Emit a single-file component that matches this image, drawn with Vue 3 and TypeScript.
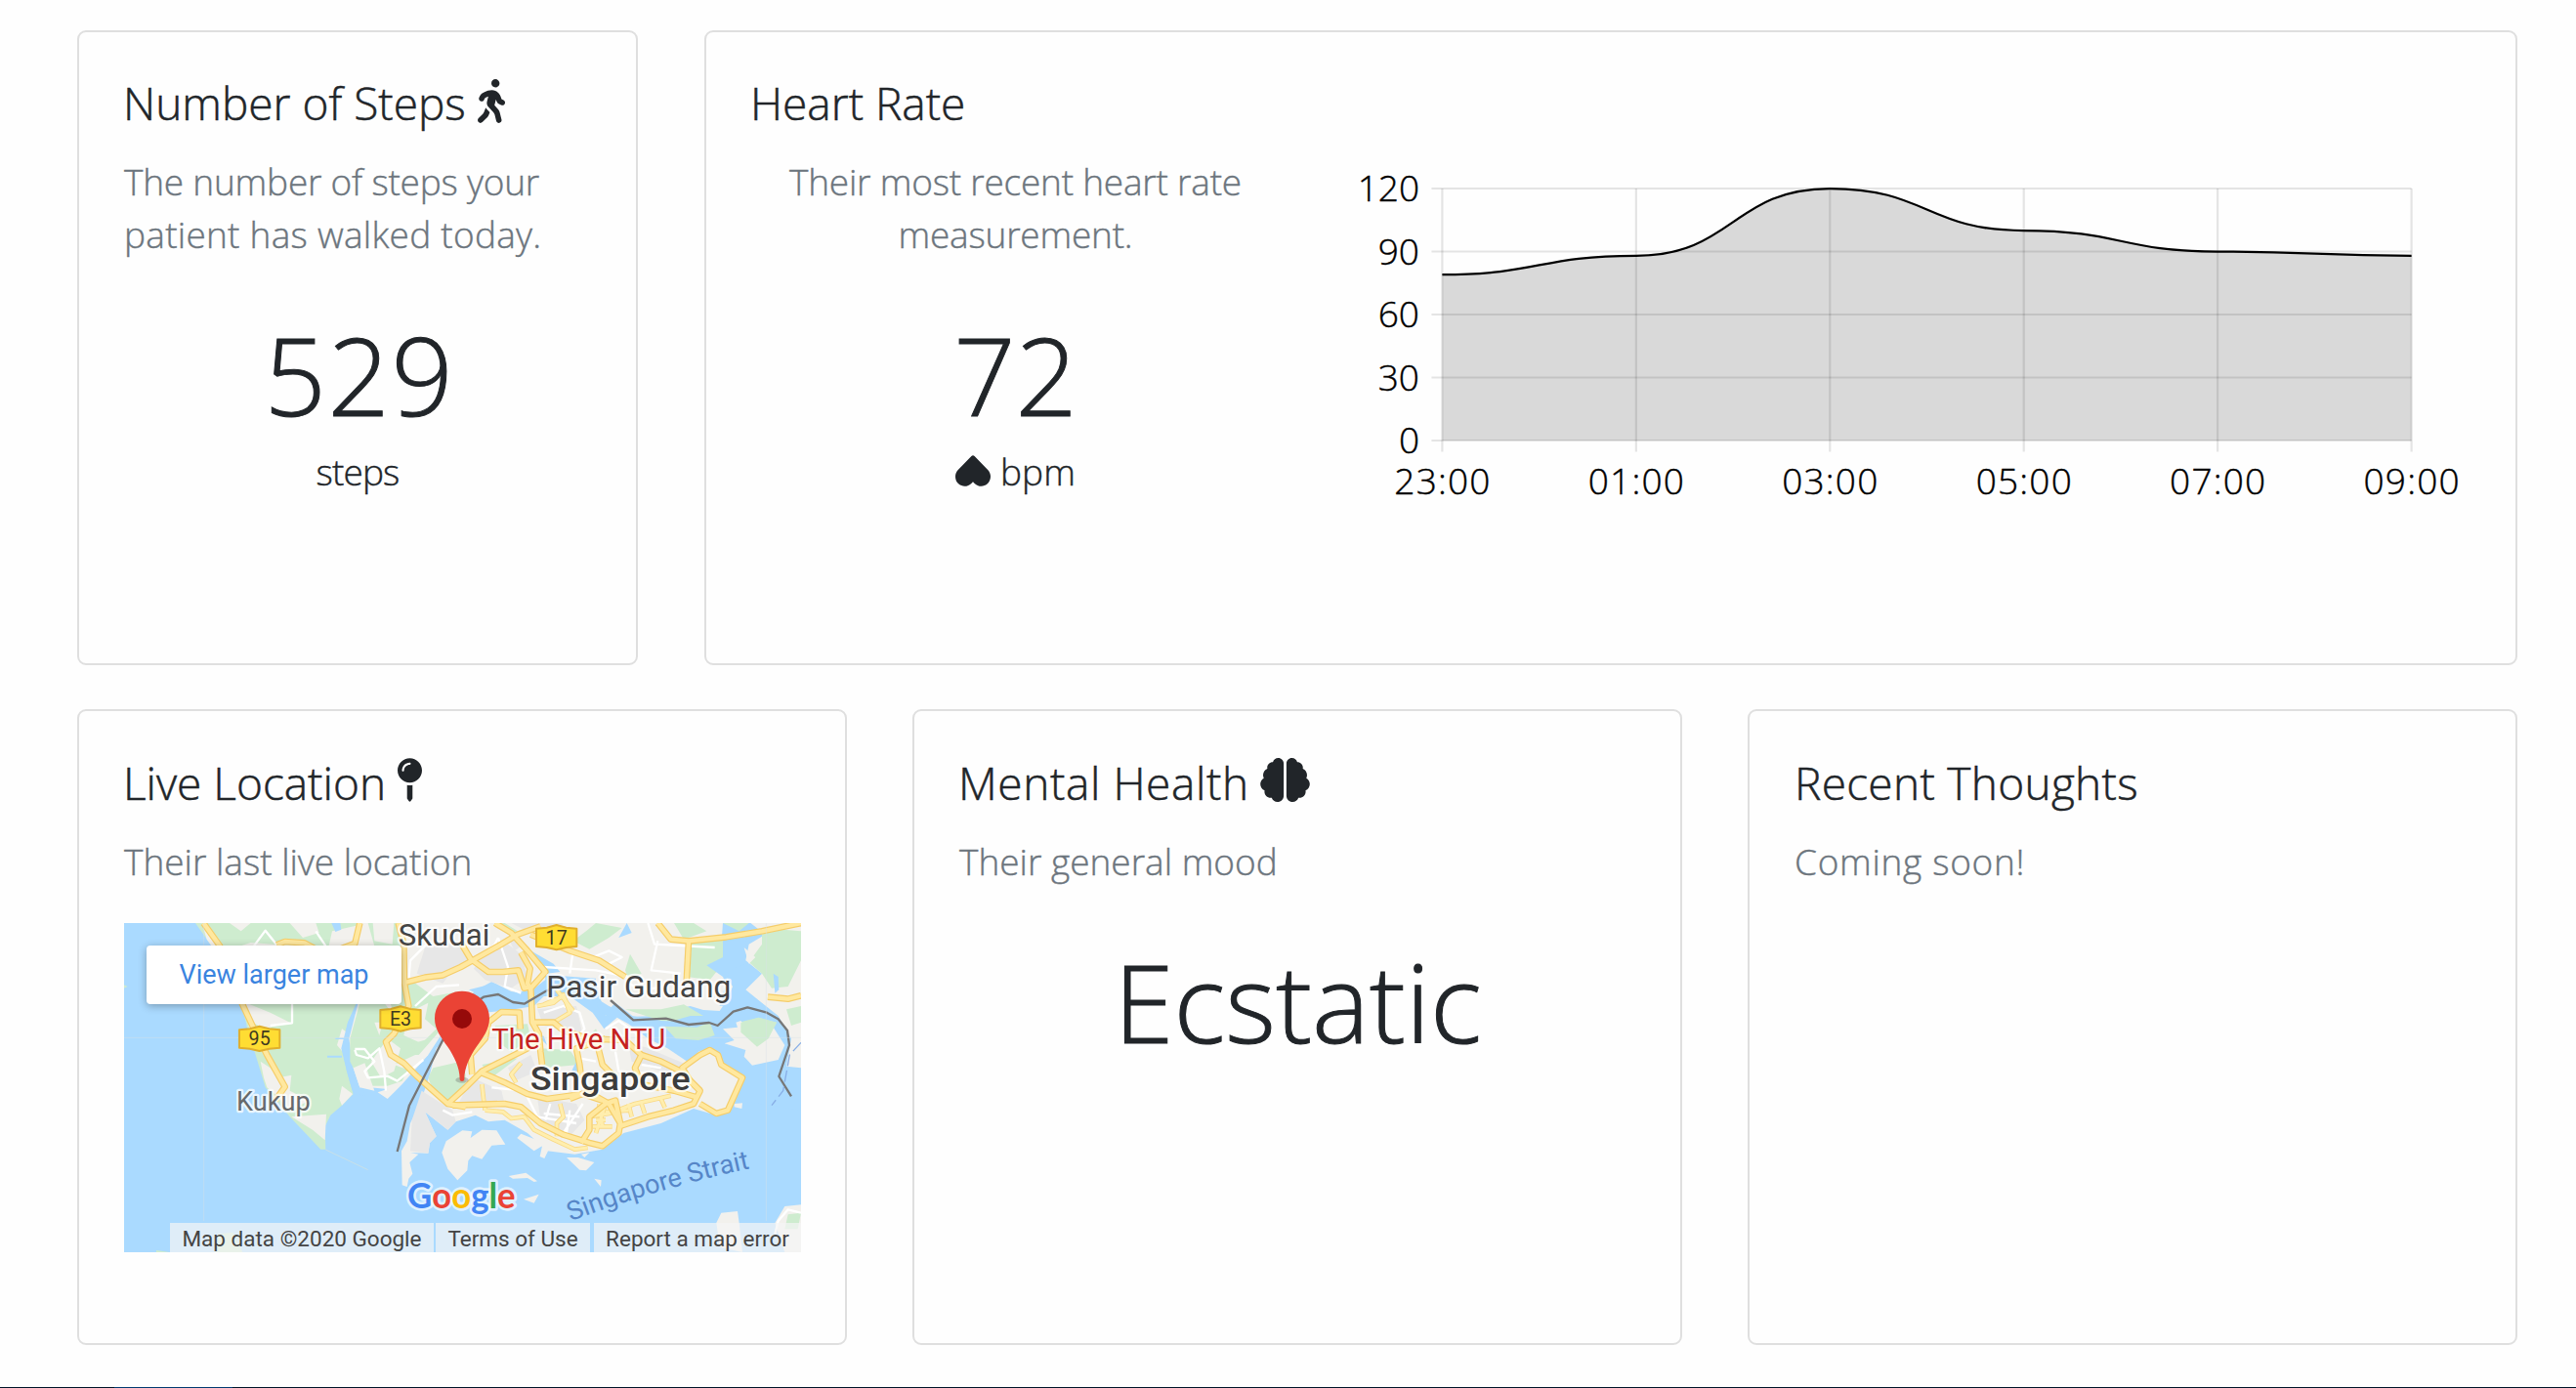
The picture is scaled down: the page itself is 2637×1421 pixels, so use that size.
<script setup lang="ts">
interface Sample { time: string; bpm: number }

const samples: Sample[] = [
  { time: '23:00', bpm: 79 },
  { time: '01:00', bpm: 88 },
  { time: '03:00', bpm: 120 },
  { time: '05:00', bpm: 100 },
  { time: '07:00', bpm: 90 },
  { time: '09:00', bpm: 88 },
]
const ticks: number[] = [120, 90, 60, 30, 0]

// Plot area inside the chart's own 1150 x 360 canvas
const left = 96.4
const right = 1088.6
const top = 28
const bottom = 286
const xAt = (i: number): number => left + (i * (right - left)) / (samples.length - 1)
const yAt = (v: number): number => bottom - (v / 120) * (bottom - top)

const curve: string = samples
  .map((s, i) => {
    const x = xAt(i)
    const y = yAt(s.bpm)
    if (i === 0) return `M${x} ${y}`
    const mid = (xAt(i - 1) + x) / 2
    return `C${mid} ${yAt(samples[i - 1].bpm)} ${mid} ${y} ${x} ${y}`
  })
  .join('')
const area: string = `${curve}L${right} ${bottom}L${left} ${bottom}Z`

const majorRoads: string[] = [
  // Johor
  'M295 45L345 115L410 285L450 370L490 450L545 548L515 590',
  'M520 112L545 102L605 106L640 125L700 130L760 108L775 45',
  'M893 45L910 110L912 230L925 300L880 385L855 410L870 450L910 475L950 515L1045 600L1100 610',
  'M912 228L975 212L1030 205L1085 180L1130 155L1210 110L1260 80L1330 55',
  'M1085 105L1115 155L1170 195L1215 195L1262 190L1280 245L1300 240',
  'M1190 45L1240 75L1290 130L1345 195L1300 245L1305 350L1325 385L1330 440L1335 480',
  'M1270 135L1298 185L1290 230L1300 250',
  'M1300 80L1420 130L1510 160L1590 210',
  'M1690 45L1730 95L1785 100L1900 88L2010 70L2130 45',
  'M1785 100L1778 230',
  'M2028 272L2090 278L2130 268',
  // Singapore
  'M1045 600L1100 550L1150 500L1210 470L1290 430L1320 400',
  'M1060 605L1220 600L1270 610L1330 660L1400 695L1480 720L1520 730L1570 690L1575 660L1540 600L1505 580L1470 565L1420 585',
  'M1150 505L1220 535L1290 570L1350 585L1460 570L1520 590',
  'M1120 510L1115 450L1160 400L1170 350L1210 318L1265 320L1268 370',
  'M1530 400L1440 430L1450 480L1455 520',
  'M1500 400L1520 480L1560 520',
  'M1310 350L1370 350L1400 375L1480 400L1590 405L1640 450L1700 470L1760 500L1820 560L1800 600L1740 620L1660 640L1570 670',
  'M1455 720L1480 680L1480 640L1530 600L1560 590L1575 660',
  'M1640 450L1620 490L1640 540L1740 560L1810 580',
  'M1820 560L1790 530L1765 490L1820 450L1850 435L1875 450L1885 480L1950 520L1905 620L1870 630L1820 600',
]
const minorRoads: string[] = [
  'M1160 620L1215 625L1240 645L1280 640L1310 680L1370 710L1435 740L1475 735',
  'M1150 540L1155 585L1160 620',
  'M1270 475L1240 510L1255 535',
  'M1320 300L1370 290L1400 265L1420 320L1370 350',
  'M1340 295L1400 270M1380 250L1430 315',
  'M1390 600L1400 640L1380 660L1380 700',
  'M1480 640L1540 630L1620 600L1730 575M1530 625L1600 620M1600 600L1610 640M1640 600L1650 630M1700 585L1712 612',
  'M1500 650L1530 650M1490 670L1550 670M1510 600L1520 670M1530 600L1500 690',
]
const lanes: string[] = [
  'M450 115L485 68L520 112',
  'M567 290L567 352L500 360',
  'M640 70L670 115',
  'M760 432L790 432L820 470L790 500L800 520L860 515L890 530L970 465',
  'M760 435L765 450L800 460L835 430L850 500L855 560',
  'M925 220L930 160L980 110',
  'M945 300L1010 240L1080 235',
  'M1200 90L1230 180L1220 240L1270 260',
  'M1130 160L1190 110L1200 90',
  'M1340 180L1500 190L1600 210',
  'M1430 130L1420 200M1490 150L1540 130L1580 150L1530 175L1500 160',
  'M1660 45L1680 110L1865 120',
  'M1690 100L1670 190L1760 200M1600 230L1640 250L1720 240',
  'M1530 370L1570 345L1620 380L1640 410',
  'M1340 320L1400 300L1450 320L1465 370L1440 400',
  'M1030 620L1060 635L1120 625',
  'M1180 550L1280 560L1320 640L1440 660',
  'M1360 600L1345 650M1420 620L1410 690M1460 600L1400 690M1340 630L1450 640',
  'M1450 460L1500 470M1560 440L1570 500L1700 510M1640 480L1700 490',
  'M2050 1000L2060 960L2090 925L2130 935',
]
const shields = [
  { label: '95', x: 467, y: 400 },
  { label: 'E3', x: 900, y: 339 },
  { label: '17', x: 1379, y: 89 },
]
</script>

<template>
  <main class="dashboard">
    <div class="row row-top">
      <section class="card steps-card">
        <h2 class="title"><span>Number of Steps</span>
          <svg class="icon walk" viewBox="0 0 320 512"><path d="M208 96c26.500 0 48-21.500 48-48S234.500 0 208 0s-48 21.500-48 48 21.500 48 48 48zm94.500 149.100l-23.300-11.800-9.700-29.400c-14.700-44.600-55.700-75.800-102.200-75.900-36-.1-55.900 10.100-93.300 25.200-21.600 8.700-39.300 25.200-49.700 46.200L17.600 213c-7.800 15.800-1.500 35 14.200 42.900 15.600 7.900 34.600 1.500 42.500-14.300L81 228c3.500-7 9.300-12.500 16.500-15.400l26.800-10.800-15.200 60.700c-5.200 20.800.4 42.900 14.900 58.800l59.900 65.400c7.200 7.900 12.300 17.400 14.900 27.700l18.300 73.300c4.300 17.100 21.700 27.600 38.800 23.300 17.100-4.300 27.600-21.700 23.300-38.800l-22.200-89c-2.600-10.300-7.700-19.900-14.900-27.700l-45.500-49.700 17.200-68.700 5.500 16.500c5.300 16.100 16.700 29.400 31.700 37l23.300 11.800c15.600 7.900 34.600 1.500 42.500-14.300 7.700-15.700 1.400-35.100-14.300-43zM73.600 385.800c-3.200 8.100-8 15.400-14.200 21.500l-50 50.100c-12.500 12.500-12.500 32.800 0 45.300s32.700 12.500 45.200 0l59.400-59.400c6.100-6.100 10.900-13.400 14.200-21.500l13.500-33.800c-55.300-60.300-38.700-41.800-47.400-53.700l-20.700 51.500z" /></svg>
        </h2>
        <p class="subtitle"><span class="tight">The number of steps your</span><br><span class="loose">patient has walked today.</span></p>
        <div class="reading figure-529">529</div>
        <div class="unit unit-steps">steps</div>
      </section>

      <section class="card heart-card">
        <div class="heart-info">
          <h2 class="title">Heart Rate</h2>
          <p class="subtitle centered"><span class="tight">Their most recent heart rate</span><br><span class="tight">measurement.</span></p>
          <div class="reading">72</div>
          <div class="unit unit-bpm">
            <svg class="heart" viewBox="0 31 512 450"><path transform="rotate(180 256 256)" d="M462.300 62.600C407.500 15.900 326 24.300 275.700 76.200L256 96.500l-19.700-20.300C186.100 24.300 104.500 15.900 49.700 62.600c-62.800 53.600-66.100 149.800-9.900 207.900l193.500 199.800c12.500 12.900 32.800 12.900 45.300 0l193.500-199.800c56.300-58.100 53-154.300-9.800-207.900z" /></svg>
            <span>bpm</span>
          </div>
        </div>
        <svg class="chart" width="1150" height="360" viewBox="0 0 1150 360">
          <g class="grid">
            <line v-for="t in ticks" :key="'h' + t" :x1="left - 11" :x2="right" :y1="yAt(t)" :y2="yAt(t)" />
            <line v-for="(s, i) in samples" :key="'v' + s.time" :x1="xAt(i)" :x2="xAt(i)" :y1="top" :y2="bottom + 11.500" />
          </g>
          <path class="area" :d="area" />
          <path class="curve" :d="curve" />
          <text v-for="t in ticks" :key="'y' + t" class="label y-label" x="73" :y="yAt(t) + 13">{{ t }}</text>
          <text v-for="(s, i) in samples" :key="'x' + s.time" class="label x-label" :x="xAt(i) + 0.600" y="341">{{ s.time }}</text>
        </svg>
      </section>
    </div>

    <div class="row row-bottom">
      <section class="card">
        <h2 class="title"><span>Live Location</span>
          <svg class="icon pin" viewBox="0 0 288 512"><path d="M112 316.940v156.690l22.020 33.020c4.750 7.120 15.220 7.120 19.970 0L176 473.630V316.940c-10.390 1.920-21.060 3.060-32 3.060s-21.610-1.140-32-3.060zM144 0C64.470 0 0 64.470 0 144s64.470 144 144 144 144-64.470 144-144S223.530 0 144 0zm0 76c-37.500 0-68 30.500-68 68 0 6.620-5.380 12-12 12s-12-5.380-12-12c0-50.730 41.280-92 92-92 6.620 0 12 5.380 12 12s-5.380 12-12 12z" /></svg>
        </h2>
        <p class="subtitle">Their last live location</p>

        <div class="map">
          <svg class="map-art" width="693" height="337" viewBox="51 45 2079 1011">
            <rect class="water" x="51" y="45" width="2079" height="1011" />
            <!-- Johor west -->
            <path class="green" d="M270 45L330 130L410 285L430 370L455 450L485 550L520 590L560 640L655 740L670 740L668 670L685 635L720 605L755 570L735 500L720 430L738 350L765 290L760 250L800 45Z" />
            <path class="land" d="M290 45L325 85L350 130L330 130L305 95ZM375 45L440 45L410 70ZM560 45L640 45L650 75L600 90ZM690 70L800 45L860 60L850 115L680 115ZM410 115L440 105L510 110L620 115ZM425 290L500 320L560 350L480 370L430 340ZM425 330L445 365L445 400ZM470 470L500 490L525 520L565 512L560 560L620 590L560 620L520 575L490 550L480 520ZM565 640L672 632L668 712L630 680ZM720 545L753 570L720 605L712 585ZM720 370L735 380L722 440L705 420Z" />
            <path class="water" d="M688 45L715 45L718 65L700 72ZM765 290L778 290L768 340L745 400L750 470L775 550L795 575L755 570L735 500L718 430L738 350ZM700 398L760 395L760 402L700 402ZM675 452L720 452L720 458L675 458Z" />
            <path class="land" d="M780 45L1890 45L1880 180L1920 240L1900 285L1880 315L1830 312L1790 300L1740 310L1700 330L1615 332L1560 290L1550 300L1530 330L1500 230L1440 215L1350 215L1290 262L1240 255L1180 225L1135 250L1085 290L1030 380L985 450L940 500L905 540L885 560L860 585L830 565L860 555L790 548L775 550L755 490L742 400L770 290Z" />
            <path class="green" d="M800 45L890 45L905 110L905 200L1000 270L1080 255L1120 275L1060 330L1000 400L930 480L905 530L860 545L790 545L765 510L745 470L745 400L775 290L850 290L880 330Z" />
            <path class="land" d="M815 45L880 45L875 110L820 100ZM925 320L985 290L975 340L1010 370L965 415L910 390ZM755 490L790 475L820 560L775 550ZM860 400L900 430L880 500L840 520L810 470ZM820 350L845 350L835 390ZM880 480L945 450L985 450L935 500Z" />
            <path class="green" d="M1190 45L1220 45L1260 70L1230 80ZM1430 100L1470 70L1500 45L1580 60L1540 90L1480 125ZM1590 190L1605 140L1640 200L1600 220ZM1780 100L1900 90L1890 170L1850 220L1780 210ZM1740 45L1800 45L1840 70L1770 95ZM1590 310L1700 310L1770 295L1830 330L1820 350L1700 345ZM920 420L990 400L960 440Z" />
            <path class="urban" d="M975 120L1090 100L1120 160L1060 190L1030 230L950 200ZM1140 160L1230 110L1270 140L1290 210L1240 245L1160 220L1125 185ZM1240 45L1400 45L1370 90L1310 80ZM1230 90L1260 80L1280 110L1250 130Z" />
            <path class="water" d="M1890 45L1975 45L1960 105L1975 165L1910 190L1880 300L2010 300L2110 410L2090 500L2130 500L2130 620L1940 590L1880 450L1820 425L1760 455L1700 405L1610 380L1560 340L1510 320L1500 275L1540 300L1610 330L1720 350L1790 330L1880 330L1920 290L1890 210L1840 175L1890 150Z" />
            <path class="water" d="M1300 130L1370 170L1390 195L1350 200L1400 208L1500 215L1500 230L1350 230L1300 250L1240 262L1170 235L1110 250L1150 270L1200 290L1280 290L1350 250L1340 180ZM1595 45L1610 75L1570 90Z" />
            <!-- Eastern shore -->
            <path class="land" d="M1975 45L2130 45L2130 490L2085 485L2100 400L2060 330L2010 290L1960 250L2010 200L1960 160L1970 110L2020 80Z" />
            <path class="green" d="M2010 60L2130 70L2130 160L2090 240L2040 245L2010 200L1970 165L2010 110ZM1890 45L1970 45L1940 70ZM1940 350L2000 335L2055 350L2030 400L1995 425L1945 380ZM2085 310L2130 300L2130 350L2100 360Z" />
            <path class="land" d="M1890 370L1935 365L1930 350L1945 345L2000 420L2045 365L2080 420L2060 465L1980 482L1955 455L1960 435L1895 415L1925 405ZM1955 120L1990 150L1970 170Z" />
            <path class="green" d="M1945 352L2000 335L2055 350L2030 400L1995 425L1945 380ZM1710 362L1810 365L1850 350L1865 390L1815 405L1745 400Z" />
            <path class="water" d="M2045 200L2060 210L2062 250L2050 260Z" />
            <!-- Singapore island -->
            <path class="land" d="M1040 400L1010 430L990 510L960 600L930 660L920 715L903 745L905 850L920 855L925 830L937 815L928 780L955 755L930 750L985 752L990 720L1010 700L975 625L1045 680L1070 655L1130 635L1170 655L1220 650L1290 690L1350 745L1435 755L1520 740L1585 690L1700 660L1800 615L1870 635L1910 615L1953 520L1890 480L1855 428L1815 440L1795 480L1720 430L1660 400L1600 355L1565 335L1525 370L1490 320L1420 270L1340 270L1310 300L1250 310L1160 320L1100 360Z" />
            <path class="urban" d="M965 560L1060 620L1070 655L1045 680L975 625L1010 700L990 720L985 752L930 745L935 650ZM1230 490L1300 450L1320 500L1250 530ZM1320 580L1440 600L1465 650L1420 700L1330 650ZM1120 520L1210 560L1220 600L1080 595ZM1600 420L1650 425L1780 480L1780 520L1700 500L1610 470ZM1320 310L1440 300L1460 390L1340 360Z" />
            <path class="green" d="M1000 490L1085 470L1100 510L1100 550L1050 595L1000 560L985 520ZM1150 480L1200 470L1260 460L1180 520ZM1330 430L1420 435L1450 480L1340 490ZM1190 360L1290 355L1300 400L1240 440L1200 410ZM1470 400L1500 370L1520 410Z" />
            <path class="water" d="M1310 385L1340 392L1350 420L1330 400ZM1425 500L1440 470L1450 520Z" />
            <!-- Southern islets -->
            <path class="land" d="M1027 750L1040 715L1090 682L1120 685L1115 705L1150 680L1195 682L1222 725L1180 728L1150 770L1120 760L1108 775L1105 805L1075 835L1045 800ZM1258 705L1270 692L1320 712L1335 705L1365 720L1342 768L1328 762L1335 730L1310 745ZM1410 765L1445 765L1495 780L1470 805L1450 803ZM1455 755L1480 750L1465 765ZM1232 822L1285 812L1320 838L1310 840L1290 828L1245 830ZM1278 893L1325 878L1310 905ZM1495 830L1517 835L1515 855ZM1870 965L1885 935L1935 930L1940 966L1950 1056L1880 1040ZM2050 966L2080 915L2130 910L2130 1056L2080 1056ZM1925 600L1950 598L1948 615L1925 610Z" />
            <path class="green" d="M2080 985L2090 940L2130 935L2120 985ZM340 1000L385 995L415 1056L330 1056ZM150 1050L190 1056L150 1056ZM51 235L62 240L51 245Z" />
            <path class="causeway" d="M670 741L735 772L800 803" />

            <path v-for="d in lanes" :key="d" class="lane" :d="d" />
            <path v-for="d in minorRoads" :key="'c' + d" class="minor-case" :d="d" />
            <path v-for="d in minorRoads" :key="d" class="minor" :d="d" />
            <path v-for="d in majorRoads" :key="'c' + d" class="major-case" :d="d" />
            <path v-for="d in majorRoads" :key="d" class="major" :d="d" />

            <path class="border-line" d="M890 747L927 605L1040 385L1090 315L1155 272L1200 264L1245 288L1280 293L1345 255L1400 230M1545 282L1615 343L1715 338L1785 357L1848 351L1874 360L1922 317L1966 304L2025 320L2060 340L2088 375L2094 420L2062 516L2100 577" />
            <path class="ferry" d="M2130 412L2095 450L2075 560L2040 605" />
            <path class="tile-line" d="M296 45V960M51 397H2130M2023 45V960" />

            <g v-for="s in shields" :key="s.label" class="shield" :transform="`translate(${s.x} ${s.y})`">
              <path d="M-62 -27L-30 -30L0 -38L30 -30L62 -27V28L30 31L0 38L-30 31L-62 28Z" />
              <text y="21">{{ s.label }}</text>
            </g>

            <text class="place" x="893" y="115" font-size="94" textLength="281" lengthAdjust="spacingAndGlyphs">Skudai</text>
            <text class="place minor-place" x="396" y="622" font-size="85" textLength="227" lengthAdjust="spacingAndGlyphs">Kukup</text>
            <text class="place" x="1348" y="272" font-size="92" textLength="567" lengthAdjust="spacingAndGlyphs">Pasir Gudang</text>
            <text class="place poi" x="1180" y="433" font-size="88" textLength="534" lengthAdjust="spacingAndGlyphs">The Hive NTU</text>
            <text class="place city" x="1298" y="557" font-size="101" textLength="492" lengthAdjust="spacingAndGlyphs">Singapore</text>
            <path id="strait" d="M1423 961Q1700 856 1990 795" fill="none" />
            <text class="strait" font-size="81"><textPath href="#strait">Singapore Strait</textPath></text>

            <ellipse class="pin-shadow" cx="1089" cy="527" rx="20" ry="9" />
            <path class="marker" d="M1089 254C1042 254 1005 292 1005 338C1005 372 1026 398 1045 425C1064 453 1082 488 1082 524C1082 533 1096 533 1096 524C1096 488 1114 453 1133 425C1152 398 1173 372 1173 338C1173 292 1136 254 1089 254Z" />
            <circle class="marker-dot" cx="1089" cy="339" r="30" />

            <text class="google" x="921" y="921" font-size="108" textLength="332" lengthAdjust="spacingAndGlyphs"><tspan fill="#4285f4">G</tspan><tspan fill="#ea4335">o</tspan><tspan fill="#fbbc05">o</tspan><tspan fill="#4285f4">g</tspan><tspan fill="#34a853">l</tspan><tspan fill="#ea4335">e</tspan></text>
          </svg>
          <a class="larger">View larger map</a>
          <footer class="credits">
            <span class="data">Map data ©2020 Google</span>
            <span class="terms">Terms of Use</span>
            <span class="report">Report a map error</span>
          </footer>
        </div>
      </section>

      <section class="card">
        <h2 class="title mental"><span>Mental Health</span>
          <svg class="icon brain" viewBox="0 0 576 512"><path d="M208 0c-29.900 0-54.700 20.500-61.800 48.200-.8 0-1.400-.2-2.200-.2-35.300 0-64 28.700-64 64 0 4.800.6 9.500 1.700 14C52.500 138 32 166.600 32 200c0 12.600 3.200 24.300 8.300 34.900C16.300 248.700 0 274.300 0 304c0 33.300 20.400 61.900 49.400 73.900-.9 4.600-1.400 9.300-1.400 14.100 0 39.800 32.200 72 72 72 4.100 0 8.100-.5 12-1.200 9.600 28.500 36.200 49.200 68 49.200 39.800 0 72-32.200 72-72V64c0-35.300-28.700-64-64-64zm368 304c0-29.700-16.300-55.300-40.300-69.100 5.200-10.600 8.300-22.300 8.300-34.900 0-33.400-20.500-62-49.700-74 1-4.500 1.700-9.200 1.700-14 0-35.300-28.700-64-64-64-.8 0-1.500.2-2.200.2C422.700 20.500 397.900 0 368 0c-35.300 0-64 28.600-64 64v376c0 39.800 32.200 72 72 72 31.800 0 58.400-20.700 68-49.200 3.900.7 7.900 1.200 12 1.200 39.800 0 72-32.200 72-72 0-4.800-.5-9.500-1.400-14.100 29-12 49.400-40.600 49.400-73.900z" /></svg>
        </h2>
        <p class="subtitle">Their general mood</p>
        <div class="reading mood">Ecstatic</div>
      </section>

      <section class="card">
        <h2 class="title thoughts">Recent Thoughts</h2>
        <p class="subtitle soon">Coming soon!</p>
      </section>
    </div>

    <div class="taskbar"><span class="task"></span></div>
  </main>
</template>

<style>
html,
body {
  background: #fefefe;
}
</style>

<style scoped>
.dashboard {
  box-sizing: border-box;
  width: 2637px;
  height: 1421px;
  padding-top: 31px;
  display: flex;
  flex-direction: column;
  overflow: hidden;
  color: #212529;
  background: #fefefe;
  font-family: "Open Sans", "Noto Sans", sans-serif;
  font-weight: 300;
}
.row {
  display: grid;
  column-gap: 67px;
  margin: 0 60px 0 79px;
}
.row-top {
  grid-template-columns: 574px 1fr;
  column-gap: 68px;
}
.row-bottom {
  grid-template-columns: repeat(3, 1fr);
  margin-top: 45px;
}
.card {
  box-sizing: border-box;
  height: 650px;
  padding: 45px 45px 0 46px;
  border: 2px solid #dfdfdf;
  border-radius: 9px;
  background: #fefefe;
}
.row-bottom .card {
  height: 651px;
}
.row-bottom .title span,
.row-bottom .thoughts {
  padding-top: 1px;
}
.row-bottom .title {
  margin-bottom: 27px;
}
.row-bottom .title:not(.thoughts) {
  height: 55px;
}
.title {
  display: flex;
  align-items: flex-start;
  margin: 0 0 27px -1px;
  font-size: 46px;
  font-weight: 300;
  line-height: 54px;
  white-space: nowrap;
  -webkit-text-stroke: 0.5px #212529;
}
.heart-card .title,
.thoughts {
  margin-left: 0;
}
.heart-card .title {
  margin-left: -1px;
}
.mental span {
  letter-spacing: 0.6px;
}
.thoughts {
  letter-spacing: 0.3px;
}
.icon {
  height: 45px;
  margin: 3px 0 0 12px;
  fill: #212529;
}
.walk {
  width: 28px;
}
.pin {
  width: 25px;
}
.brain {
  width: 51px;
  margin-left: 11px;
}
.subtitle {
  margin: 0;
  color: #6c757d;
  font-size: 37px;
  line-height: 54px;
  white-space: nowrap;
  -webkit-text-stroke: 0.4px #6c757d;
}
.tight {
  letter-spacing: -0.21px;
}
.loose {
  letter-spacing: 0.26px;
}
.soon {
  letter-spacing: 0.7px;
}
.centered {
  text-align: center;
}
.reading {
  margin-top: 51px;
  font-size: 111px;
  line-height: 130px;
  text-align: center;
  -webkit-text-stroke: 1px #212529;
}
.figure-529 {
  letter-spacing: 1.6px;
  padding-left: 3px;
}
.mood {
  margin-top: 51px;
}
.unit {
  display: flex;
  justify-content: center;
  align-items: flex-start;
  margin-top: 8px;
  font-size: 37px;
  line-height: 54px;
  -webkit-text-stroke: 0.4px #212529;
}
.unit-steps {
  letter-spacing: -0.85px;
  padding-right: 1px;
}
.unit-bpm {
  gap: 10px;
  letter-spacing: 0.1px;
}
.heart {
  width: 36px;
  height: 32px;
  margin-top: 10px;
  fill: #212529;
}
.heart-card {
  display: flex;
  justify-content: space-between;
  padding-right: 45px;
}
.heart-info {
  width: 541px;
}
.chart {
  margin: 87px 0 0;
  flex: none;
}
.grid line {
  stroke: #000;
  stroke-opacity: 0.1;
  stroke-width: 2.2;
}
.area {
  fill: #000;
  fill-opacity: 0.145;
}
.curve {
  fill: none;
  stroke: #000;
  stroke-width: 2.25;
}
.label {
  font-size: 37px;
  fill: #000;
  stroke: #000;
  stroke-width: 0.4;
}
.x-label {
  text-anchor: middle;
  letter-spacing: 1.2px;
}
.y-label {
  text-anchor: end;
}
.map {
  position: relative;
  width: 693px;
  height: 337px;
  margin-top: 36px;
  overflow: hidden;
  font-family: Roboto, "Open Sans", sans-serif;
  font-weight: 400;
}
.map-art {
  display: block;
}
.map-art path {
  stroke-linejoin: round;
}
.water {
  fill: #aadaff;
}
.land {
  fill: #f2f1ed;
}
.green {
  fill: #ceeccf;
}
.urban {
  fill: #e7e7e7;
}
.causeway {
  fill: none;
  stroke: #c8e0e8;
  stroke-width: 3;
}
.lane {
  fill: none;
  stroke: #fff;
  stroke-width: 7;
}
.minor-case {
  fill: none;
  stroke: #f9d984;
  stroke-width: 14;
}
.minor {
  fill: none;
  stroke: #ffeeae;
  stroke-width: 9;
}
.major-case {
  fill: none;
  stroke: #f5cd69;
  stroke-width: 20;
}
.major {
  fill: none;
  stroke: #ffe89f;
  stroke-width: 13;
}
.border-line {
  fill: none;
  stroke: #777;
  stroke-width: 7;
}
.ferry {
  fill: none;
  stroke: #88aee6;
  stroke-width: 4;
  stroke-dasharray: 36 14;
}
.tile-line {
  fill: none;
  stroke: #d9dfe6;
  stroke-opacity: 0.45;
  stroke-width: 3;
}
.shield path {
  fill: #ffdd33;
  stroke: #e0af2d;
  stroke-width: 6;
}
.shield text {
  font-size: 59px;
  fill: #3f3a20;
  text-anchor: middle;
}
.place {
  fill: #444;
  stroke: #fff;
  stroke-opacity: 0.75;
  stroke-width: 14;
  stroke-linejoin: round;
  paint-order: stroke;
}
.minor-place {
  fill: #66696c;
}
.poi {
  fill: #c5221f;
}
.city {
  fill: #3c3c3c;
  font-weight: 500;
}
.strait {
  fill: #5686c8;
}
.pin-shadow {
  fill: #555;
  fill-opacity: 0.3;
}
.marker {
  fill: #ea4335;
}
.marker-dot {
  fill: #960a0a;
}
.google {
  font-family: Lato, "Open Sans", sans-serif;
  font-weight: 700;
  stroke: #fff;
  stroke-opacity: 0.65;
  stroke-width: 16;
  stroke-linejoin: round;
  paint-order: stroke;
}
.larger {
  position: absolute;
  left: 23px;
  top: 23px;
  box-sizing: border-box;
  width: 261px;
  height: 60px;
  border-radius: 4px;
  background: #fff;
  box-shadow: 0 2px 9px rgba(0, 0, 0, 0.3);
  color: #3a84df;
  font-size: 27px;
  line-height: 60px;
  text-align: center;
  white-space: nowrap;
}
.credits {
  position: absolute;
  left: 47px;
  right: 0;
  bottom: 0;
  display: flex;
  height: 30px;
  color: #444;
  font-size: 22.5px;
  line-height: 33px;
  text-align: center;
  white-space: nowrap;
}
.credits span {
  background: rgba(245, 245, 245, 0.7);
}
.data {
  width: 270px;
  margin-right: 2px;
}
.terms {
  width: 158px;
  margin-right: 4px;
}
.report {
  flex: 1;
}
.taskbar {
  display: flex;
  height: 1px;
  margin-top: 43px;
  background: #001528;
}
.task {
  width: 121px;
  margin-left: 117px;
  background: #013a70;
}
</style>
